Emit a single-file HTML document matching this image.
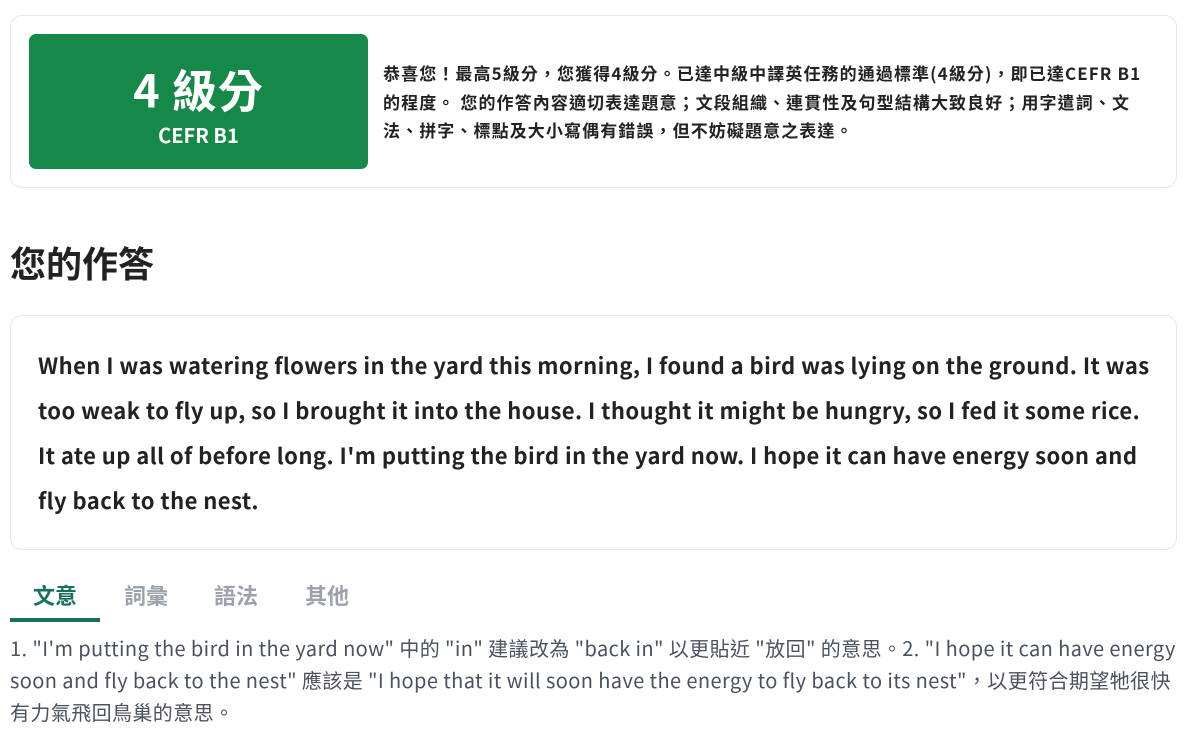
<!DOCTYPE html>
<html><head><meta charset="utf-8"><style>
*{margin:0;padding:0;box-sizing:border-box}
body{width:1186px;height:735px;background:#fff;font-family:"Noto Sans CJK TC","Liberation Sans",sans-serif;color:#222;overflow:hidden;position:relative}
.card1{position:absolute;left:10px;top:15px;width:1167px;height:173px;border:1px solid #e6e6e6;border-radius:12px}
.green{position:absolute;left:29px;top:34px;width:339px;height:135px;background:#168848;border-radius:7px;color:#fff;text-align:center}
.big{position:absolute;left:0;right:0;top:58px;font-size:45px;font-weight:700;line-height:1;transform:translateY(-50%);margin-top:-4px;letter-spacing:1px}
.cefr{position:absolute;left:0;right:0;top:89px;font-size:20px;font-weight:700;line-height:24px}
.desc{position:absolute;left:383px;top:59px;font-size:17px;font-weight:700;line-height:28.5px;white-space:nowrap;color:#222;letter-spacing:1.1px}
h2{position:absolute;left:10px;top:238px;font-size:36px;font-weight:700;line-height:48px;color:#222}
.card2{position:absolute;left:10px;top:315px;width:1167px;height:235px;border:1px solid #e6e6e6;border-radius:12px}
.ans{position:absolute;left:38px;top:343px;font-size:22px;font-weight:700;line-height:45px;white-space:nowrap;color:#222;letter-spacing:0.44px}
.tab{position:absolute;top:579px;width:90px;text-align:center;font-size:22px;font-weight:700;line-height:32px;color:#9ba2ac}
.tab.on{color:#17705e}
.ul{position:absolute;left:10px;top:618px;width:90px;height:4px;background:#17705e}
.fb{position:absolute;left:10px;top:632px;font-size:20px;line-height:32px;color:#4a5260;white-space:nowrap;letter-spacing:0.4px}
</style></head><body>
<div class="card1"></div>
<div class="green"><div class="big">4 級分</div><div class="cefr">CEFR B1</div></div>
<div class="desc">恭喜您！最高5級分，您獲得4級分。已達中級中譯英任務的通過標準(4級分)，即已達CEFR B1<br>的程度。 您的作答內容適切表達題意；文段組織、連貫性及句型結構大致良好；用字遣詞、文<br>法、拼字、標點及大小寫偶有錯誤，但不妨礙題意之表達。</div>
<h2>您的作答</h2>
<div class="card2"></div>
<div class="ans">When I was watering flowers in the yard this morning, I found a bird was lying on the ground. It was<br>too weak to fly up, so I brought it into the house. I thought it might be hungry, so I fed it some rice.<br>It ate up all of before long. I'm putting the bird in the yard now. I hope it can have energy soon and<br>fly back to the nest.</div>
<div class="tab on" style="left:10px">文意</div>
<div class="tab" style="left:101px">詞彙</div>
<div class="tab" style="left:191px">語法</div>
<div class="tab" style="left:282px">其他</div>
<div class="ul"></div>
<div class="fb">1. "I'm putting the bird in the yard now" 中的 "in" 建議改為 "back in" 以更貼近 "放回" 的意思。2. "I hope it can have energy<br>soon and fly back to the nest" 應該是 "I hope that it will soon have the energy to fly back to its nest"，以更符合期望牠很快<br>有力氣飛回鳥巢的意思。</div>
</body></html>
